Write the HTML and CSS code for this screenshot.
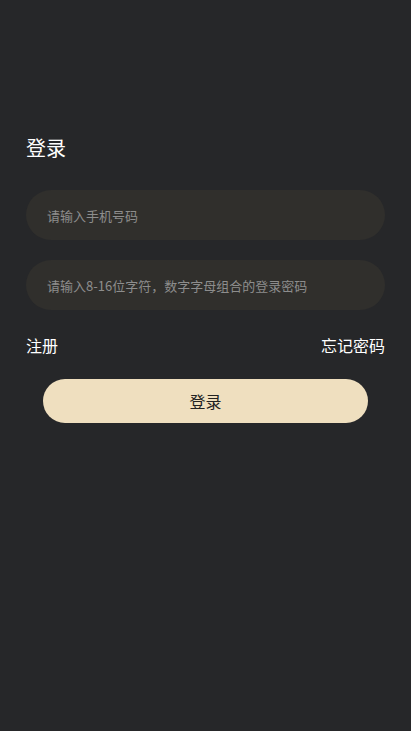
FILE: index.html
```html
<!DOCTYPE html>
<html lang="zh">
<head>
<meta charset="utf-8">
<meta name="viewport" content="width=device-width, initial-scale=1">
<title>登录</title>
<link rel="stylesheet" href="styles.css">
</head>
<body>
<main class="page">
  <h1 class="title">登录</h1>
  <form class="form">
    <input class="field" type="tel" placeholder="请输入手机号码">
    <input class="field" type="password" placeholder="请输入8-16位字符，数字字母组合的登录密码">
    <div class="links">
      <a class="link" href="#">注册</a>
      <a class="link" href="#">忘记密码</a>
    </div>
    <button class="submit" type="button">登录</button>
  </form>
</main>
</body>
</html>
```
FILE: styles.css
```css
html, body {
  margin: 0;
  padding: 0;
  background: #262729;
  height: 100%;
}
body {
  font-family: "Noto Sans CJK SC", "Noto Sans", sans-serif;
  color: #ffffff;
}
.page {
  padding: 134px 26px 0;
}
.title {
  margin: 0;
  font-size: 20px;
  line-height: 28px;
  font-weight: 400;
  color: #ffffff;
}
.form {
  margin-top: 28px;
  display: flex;
  flex-direction: column;
}
.field {
  box-sizing: border-box;
  height: 50px;
  border: none;
  outline: none;
  border-radius: 25px;
  background: #302f2c;
  padding: 0 21px;
  font-family: inherit;
  font-size: 13px;
  color: #ffffff;
  margin-bottom: 20px;
}
.field::placeholder {
  color: #8d8d8d;
}
.links {
  margin-top: 4px;
  display: flex;
  justify-content: space-between;
  font-size: 16px;
  line-height: 22px;
}
.link {
  color: #ffffff;
  text-decoration: none;
}
.submit {
  margin: 23px 17px 0;
  height: 44px;
  border: none;
  border-radius: 22px;
  background: #efdfbf;
  color: #222222;
  font-family: inherit;
  font-size: 16px;
}
```
